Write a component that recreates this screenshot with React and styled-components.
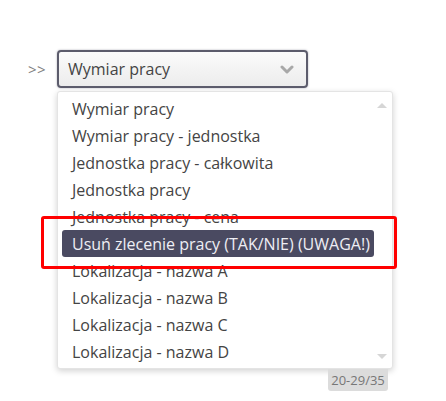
import React from "react";
import styled, { createGlobalStyle } from "styled-components";

const Global = createGlobalStyle`
  html, body { margin: 0; padding: 0; background: #fff; }
  body { font-family: "Open Sans", "Noto Sans", sans-serif; }
`;

const Page = styled.div`
  position: relative;
  width: 446px;
  height: 401px;
  padding: 50px 0 0 28px;
  box-sizing: border-box;
`;

const Row = styled.div`
  display: flex;
  align-items: center;
`;

const Prompt = styled.span`
  width: 29px;
  font-size: 15px;
  color: #808080;
  letter-spacing: 0.5px;
`;

const Field = styled.div`
  position: relative;
`;

const Select = styled.div`
  box-sizing: border-box;
  width: 251px;
  height: 38px;
  border: 2px solid #5c5c6c;
  border-radius: 4px;
  background: linear-gradient(#fbfbfb, #ececec);
  box-shadow: 0 0 2px rgba(80, 80, 100, 0.5);
  display: flex;
  align-items: center;
  justify-content: space-between;
  padding: 0 12px 0 9px;
  font-size: 16px;
  color: #444;
`;

const Chevron = styled.svg`
  width: 14px;
  height: 9px;
  display: block;
`;

const Popup = styled.div`
  position: absolute;
  top: 41px;
  left: 0;
  width: 336px;
  display: flex;
  flex-direction: column;
  align-items: flex-end;
`;

const Panel = styled.div`
  box-sizing: border-box;
  width: 100%;
  padding: 3px 4px;
  background: #fff;
  border: 1px solid #e4e4e4;
  border-radius: 3px;
  box-shadow: 0 2px 6px rgba(0, 0, 0, 0.18);
  display: flex;
  gap: 2px;
`;

const List = styled.div`
  flex: 1;
  display: flex;
  flex-direction: column;
`;

const Item = styled.div`
  height: 27px;
  display: flex;
  align-items: center;
  padding-left: 10px;
  font-size: 16px;
  color: ${(p) => (p.$active ? "#eeeef4" : "#444")};
  background: ${(p) => (p.$active ? "#4a4a61" : "transparent")};
  border-radius: 3px;
  white-space: nowrap;
`;

const ScrollBar = styled.div`
  width: 12px;
  display: flex;
  flex-direction: column;
  justify-content: space-between;
  align-items: center;
  padding: 8px 0 6px;
`;

const Arrow = styled.div`
  width: 0;
  height: 0;
  border-left: 5px solid transparent;
  border-right: 5px solid transparent;
  ${(p) =>
    p.$up ? "border-bottom: 5px solid #d6d6d6;" : "border-top: 5px solid #d6d6d6;"}
`;

const Counter = styled.div`
  margin-right: 5px;
  width: 60px;
  height: 22px;
  background: #dcdcdc;
  border-radius: 0 0 3px 3px;
  display: flex;
  align-items: center;
  justify-content: center;
  font-size: 13px;
  color: #777;
`;

const Annotation = styled.div`
  position: absolute;
  left: 41px;
  top: 216px;
  width: 356px;
  height: 53px;
  box-sizing: border-box;
  border: 3px solid #f00;
  border-radius: 3px;
  pointer-events: none;
`;

const items = [
  "Wymiar pracy",
  "Wymiar pracy - jednostka",
  "Jednostka pracy - całkowita",
  "Jednostka pracy",
  "Jednostka pracy - cena",
  "Usuń zlecenie pracy (TAK/NIE) (UWAGA!)",
  "Lokalizacja - nazwa A",
  "Lokalizacja - nazwa B",
  "Lokalizacja - nazwa C",
  "Lokalizacja - nazwa D",
];

export default function App() {
  return (
    <>
      <Global />
      <Page>
        <Row>
          <Prompt>&gt;&gt;</Prompt>
          <Field>
            <Select>
              <span>Wymiar pracy</span>
              <Chevron viewBox="0 0 14 9">
                <path
                  d="M2 2 L7 7 L12 2"
                  fill="none"
                  stroke="#a8a8a8"
                  strokeWidth="3"
                  strokeLinecap="round"
                  strokeLinejoin="round"
                />
              </Chevron>
            </Select>
            <Popup>
              <Panel>
                <List>
                  {items.map((t, i) => (
                    <Item key={t} $active={i === 5}>
                      {t}
                    </Item>
                  ))}
                </List>
                <ScrollBar>
                  <Arrow $up />
                  <Arrow />
                </ScrollBar>
              </Panel>
              <Counter>20-29/35</Counter>
            </Popup>
          </Field>
        </Row>
        <Annotation />
      </Page>
    </>
  );
}
